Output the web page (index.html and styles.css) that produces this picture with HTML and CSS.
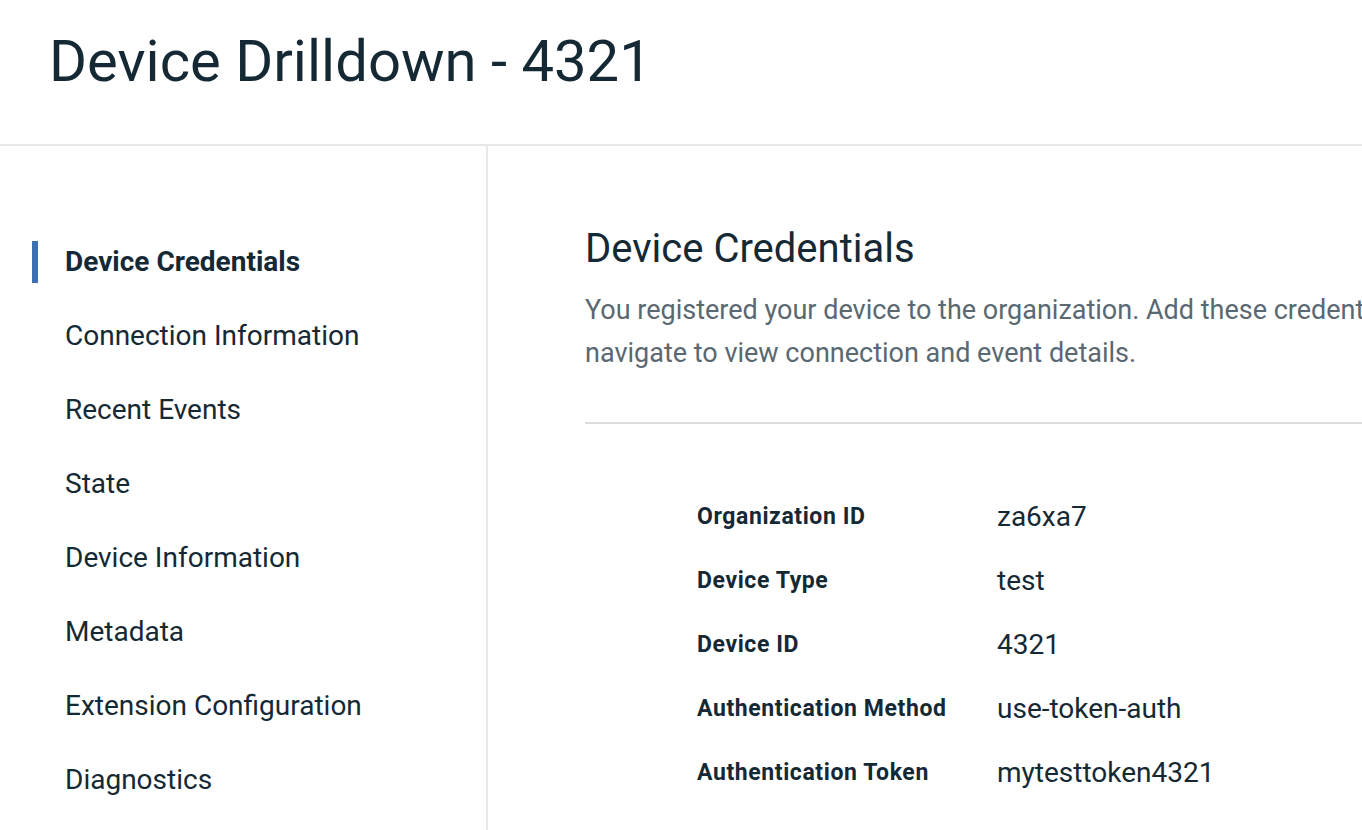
FILE: index.html
```html
<!DOCTYPE html>
<html lang="en">
<head>
<meta charset="utf-8">
<title>Device Drilldown - 4321</title>
<link rel="stylesheet" href="styles.css">
</head>
<body>
<header class="page-header">
  <h1 class="page-title">Device Drilldown - 4321</h1>
</header>
<div class="layout">
  <nav class="sidebar">
    <ul class="nav-list">
      <li class="nav-item active">Device Credentials</li>
      <li class="nav-item">Connection Information</li>
      <li class="nav-item">Recent Events</li>
      <li class="nav-item">State</li>
      <li class="nav-item">Device Information</li>
      <li class="nav-item">Metadata</li>
      <li class="nav-item">Extension Configuration</li>
      <li class="nav-item">Diagnostics</li>
    </ul>
  </nav>
  <main class="content">
    <h2 class="section-title">Device Credentials</h2>
    <p class="section-desc">You registered your device to the organization. Add these credentials to your device to connect it to the platform. After your device is connected,<br>navigate to view connection and event details.</p>
    <hr class="divider">
    <dl class="cred-table">
      <div class="cred-row"><dt>Organization ID</dt><dd>za6xa7</dd></div>
      <div class="cred-row"><dt>Device Type</dt><dd>test</dd></div>
      <div class="cred-row"><dt>Device ID</dt><dd>4321</dd></div>
      <div class="cred-row"><dt>Authentication Method</dt><dd>use-token-auth</dd></div>
      <div class="cred-row"><dt>Authentication Token</dt><dd>mytesttoken4321</dd></div>
    </dl>
  </main>
</div>
</body>
</html>
```

FILE: styles.css
```css
* { box-sizing: border-box; }
html, body {
  margin: 0;
  padding: 0;
  width: 1362px;
  height: 830px;
  overflow: hidden;
  background: #ffffff;
  font-family: "Roboto", "Noto Sans", sans-serif;
  color: #152935;
}
.page-header {
  height: 146px;
  padding-left: 49px;
  border-bottom: 2px solid #e8e8e8;
  display: flex;
  align-items: flex-start;
}
.page-title {
  margin: 0;
  margin-top: 26px;
  font-size: 58px;
  line-height: 70px;
  font-weight: 400;
  letter-spacing: 0;
}
.layout {
  display: flex;
  height: 684px;
}
.sidebar {
  width: 488px;
  flex: none;
  border-right: 2px solid #e8e8e8;
  padding-top: 79px;
}
.nav-list {
  list-style: none;
  margin: 0;
  padding: 0;
}
.nav-item {
  position: relative;
  height: 74px;
  line-height: 74px;
  padding-left: 65px;
  font-size: 28px;
  color: #152935;
}
.nav-item.active {
  font-weight: 700;
}
.nav-item.active::before {
  content: "";
  position: absolute;
  left: 32px;
  top: 16px;
  width: 6px;
  height: 42px;
  background: #3d70b2;
}
.content {
  flex: 1;
  min-width: 0;
  padding-left: 97px;
  padding-top: 79px;
  white-space: nowrap;
  overflow: hidden;
}
.section-title {
  margin: 0;
  font-size: 40px;
  line-height: 48px;
  font-weight: 400;
  color: #152935;
}
.section-desc {
  margin: 16px 0 0;
  font-size: 27px;
  line-height: 43px;
  color: #5a6872;
}
.divider {
  margin: 47px 0 0;
  border: 0;
  border-top: 2px solid #dcdcdc;
  height: 0;
}
.cred-table {
  margin: 60px 0 0;
  padding-left: 112px;
}
.cred-row {
  display: flex;
  height: 64px;
  align-items: center;
}
.cred-row dt {
  width: 300px;
  flex: none;
  font-size: 23px;
  letter-spacing: 0.6px;
  font-weight: 700;
  color: #152935;
}
.cred-row dd {
  margin: 0;
  font-size: 28px;
  color: #152935;
}
```
